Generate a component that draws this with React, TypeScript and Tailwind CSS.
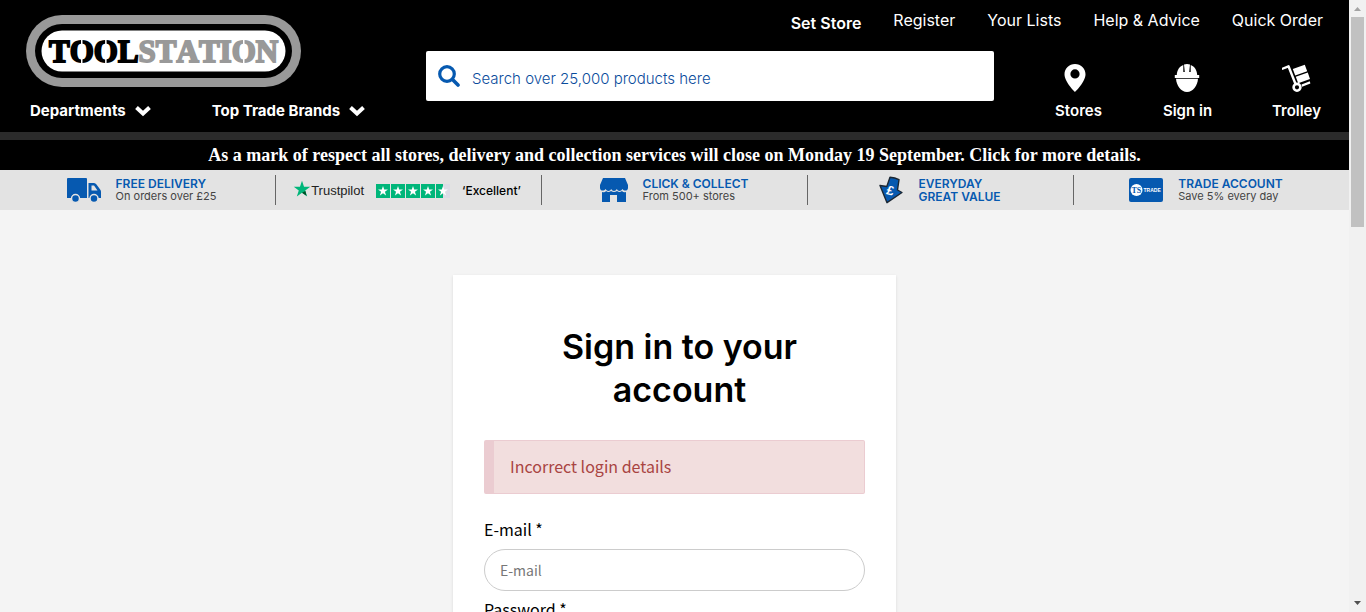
import React from "react";

const display = "font-['Inter','Liberation_Sans',sans-serif]";
const source = "font-['Noto_Sans_CJK_SC',sans-serif]";

function Logo() {
  return (
    <svg viewBox="0 0 275 72" className="block h-[72px] w-[275px]" role="img" aria-label="Toolstation">
      <rect width="275" height="72" rx="36" fill="#999" />
      <rect x="9" y="9" width="257" height="54" rx="27" fill="#000" />
      <rect x="15.500" y="15.500" width="244" height="41" rx="20.500" fill="#fff" />
      <text
        x="23"
        y="47"
        className="[font-kerning:none]"
        fontFamily="'Liberation Serif', serif"
        fontWeight="700"
        fontSize="31"
        fill="#000"
        stroke="#000"
        strokeWidth="1.800"
      >
        TOOL
        <tspan fill="#999" stroke="#999">STATION</tspan>
      </text>
      <path fill="#fff" d="M55 24h1.500v25H55zM79.100 24h1.500v25h-1.500zM217 24h1.500v25H217z" />
    </svg>
  );
}

function Chevron() {
  return (
    <svg viewBox="0 0 16 12" className="h-3 w-4" aria-hidden="true">
      <path d="M1.500 2.500 8 8.500l6.500-6" fill="none" stroke="#fff" strokeWidth="4" />
    </svg>
  );
}

function PinIcon() {
  return (
    <svg viewBox="4 0 30 30" className="h-[30px] w-[30px]" fill="#fff" aria-hidden="true">
      <path
        fillRule="evenodd"
        d="M15 1C9.200 1 4.500 5.600 4.500 11.300 4.500 19 15 29 15 29s10.500-10 10.500-17.700C25.500 5.600 20.800 1 15 1zm0 14.500a4.600 4.600 0 1 1 0-9.200 4.600 4.600 0 0 1 0 9.200z"
      />
    </svg>
  );
}

function HelmetIcon() {
  return (
    <svg viewBox="1 0 30 30" className="h-[30px] w-[30px]" fill="#fff" aria-hidden="true">
      <path d="M11.300 2v7h1.500L12 1.500q3-1 6 0L17.200 9h1.500V2c4 1.500 6.300 5.400 6.500 10h2v3H2.800v-3h2C5 7.400 7.300 3.500 11.300 2z" />
      <path d="M4 15.700h22c-.4 6.300-4.700 13.300-11 13.300S4.400 22 4 15.700z" />
    </svg>
  );
}

function TrolleyIcon() {
  return (
    <svg viewBox="1 0 30 30" className="h-[30px] w-[30px]" fill="#fff" aria-hidden="true">
      <path d="M.8 6 7.500 3.300 14.500 21" fill="none" stroke="#fff" strokeWidth="2.400" strokeLinejoin="round" />
      <circle cx="16" cy="24.300" r="3.400" fill="none" stroke="#fff" strokeWidth="2.600" />
      <path d="m11.800 6 12-4.200 2.400 6.500-12 4.200zM14.800 13.700l12-4.200 2.200 6.600-11.800 4.200zM20.500 21.500l8.300-3.200.6 2.300-8.300 3.200z" />
    </svg>
  );
}

function TruckIcon() {
  return (
    <svg viewBox="0 0 34 26" className="h-[26px] w-[34px]" aria-hidden="true">
      <path fill="#0659b0" d="M1 1h18q1 0 1 1v19H0V2q0-1 1-1zM21.500 6H27q1.500 0 2.500 1.500l4 5.500q.5 1 .5 2v6H21.500z" />
      <path fill="#e3e3e3" d="M24.500 8.500h2.500l3.500 5h-6z" />
      <g fill="#0659b0" stroke="#e3e3e3" strokeWidth="1.500">
        <circle cx="8.500" cy="21.500" r="4" />
        <circle cx="27" cy="21.500" r="4" />
      </g>
    </svg>
  );
}

function ShopIcon() {
  return (
    <svg viewBox="0 0 28 24" className="h-6 w-7" fill="#0659b0" aria-hidden="true">
      <path d="M3 0h22l3 7v3c0 3-4 3.500-5.500 1-1.500 2.500-4.500 2.500-5.700 0-1.200 2.500-4.400 2.500-5.600 0-1.200 2.500-4.200 2.500-5.700 0C4 13.500 0 13 0 10V7z" />
      <path d="M2 14q3 1 4-1 2.500 2 5 0 3 2 6 0 2.500 2 5 0 1.500 2 4 1v10h-9v-7h-7v7H2z" />
    </svg>
  );
}

function ValueIcon() {
  return (
    <svg viewBox="0 0 24 28" className="h-7 w-6" aria-hidden="true">
      <path
        d="M11 1.200q5 .2 9 2.500l-1.500 10.300 4.500 2.500-15 10.200L1 9.500l6.800 1z"
        fill="#0659b0"
        stroke="#1b2733"
        strokeWidth="1.400"
        strokeLinejoin="round"
      />
      <text
        x="7.500"
        y="19"
        fontFamily="'Liberation Sans', sans-serif"
        fontWeight="700"
        fontSize="13"
        fill="#fff"
        transform="rotate(14 11 15)"
      >
        £
      </text>
    </svg>
  );
}

function TradeIcon() {
  return (
    <svg viewBox="0 0 34 24" className="h-6 w-[34px]" aria-hidden="true">
      <rect width="34" height="24" rx="2" fill="#0659b0" />
      <circle cx="7.500" cy="12" r="6" fill="#fff" />
      <text x="2.500" y="14.800" fontFamily="'Liberation Serif', serif" fontWeight="700" fontSize="8" fill="#0659b0">
        TS
      </text>
      <text x="14.500" y="14" fontFamily="'Liberation Sans', sans-serif" fontWeight="700" fontSize="5" fill="#fff">
        TRADE
      </text>
    </svg>
  );
}

const STAR = "M12 1l2.700 8h8.300l-6.700 5 2.600 8L12 17l-6.900 5 2.600-8L1 9h8.300z";

function Trustpilot() {
  return (
    <a href="#reviews" className="flex items-center pt-[2px] pr-[2px] text-[#222]">
      <svg viewBox="0 0 24 24" className="mb-1 h-[18px] w-[18px]" aria-hidden="true">
        <path d={STAR} fill="#00b67a" />
        <path d="M16.500 14.500 12 17l6 4z" fill="#005128" />
      </svg>
      <span className="text-[13px] leading-4 font-['Liberation_Sans',sans-serif]">Trustpilot</span>
      <span className="ml-3 flex gap-px" role="img" aria-label="4.5 out of 5 stars">
        {[0, 1, 2, 3, 4].map((i) => (
          <svg key={i} viewBox="0 0 28 28" className="h-[14px] w-[14px]">
            <rect width="28" height="28" fill="#dcdce6" />
            <rect width={i === 4 ? 14 : 28} height="28" fill="#00b67a" />
            <path d={STAR} transform="translate(3.200 3) scale(.9)" fill="#fff" />
          </svg>
        ))}
      </span>
      <span className="ml-3 text-[12px] leading-4 font-medium text-black">‘Excellent’</span>
    </a>
  );
}

function Usp({ icon, title, sub, blueSub }: { icon: React.ReactNode; title: string; sub: string; blueSub?: boolean }) {
  return (
    <a href="#info" className="flex items-center gap-[15px]">
      {icon}
      <span className="flex flex-col text-[12px] leading-[13px] whitespace-nowrap">
        <span className="font-semibold text-[#0659b0]">{title}</span>
        <span className={blueSub ? "font-semibold text-[#0659b0]" : "text-[11px] text-[#444]"}>{sub}</span>
      </span>
    </a>
  );
}

function Scrollbar() {
  return (
    <div className="flex w-[17px] shrink-0 flex-col items-center justify-between bg-[#f1f1f1]" aria-hidden="true">
      <div className="flex flex-col items-center">
        <svg viewBox="0 0 17 17" className="h-[17px] w-[17px]">
          <path d="M5 11h7L8.500 7z" fill="#a3a3a3" />
        </svg>
        <div className="h-[210px] w-[13px] bg-[#c1c1c1]" />
      </div>
      <svg viewBox="0 0 17 17" className="h-[17px] w-[17px]">
        <path d="M5 6h7l-3.500 4z" fill="#505050" />
      </svg>
    </div>
  );
}

export default function App() {
  return (
    <div className={`flex h-screen overflow-hidden bg-[#f4f4f4] text-black ${display}`}>
      <div className="min-w-0 flex-1 overflow-hidden">
        <header className="flex h-[140px] justify-between border-b-8 border-[#2b2b2b] bg-black text-white">
          <div className="flex w-[426px] shrink-0 flex-col pt-[15px] pl-[26px]">
            <a href="#home">
              <Logo />
            </a>
            <nav className="mt-3 flex gap-[61px] pl-1 text-[15px] leading-6 font-bold">
              <button className="flex items-center gap-[9px]">
                Departments <Chevron />
              </button>
              <button className="flex items-center gap-[9px]">
                Top Trade Brands <Chevron />
              </button>
            </nav>
          </div>
          <div className="flex min-w-0 flex-1 flex-col">
            <nav className="flex h-[51px] items-start justify-end gap-8 pt-2 pr-[26px] text-[16px] leading-6">
              <button className="pt-[3px] font-semibold">Set Store</button>
              <a href="#register">Register</a>
              <a href="#lists">Your Lists</a>
              <a href="#help">Help &amp; Advice</a>
              <a href="#quick">Quick Order</a>
            </nav>
            <div className="flex justify-between">
              <label className="flex h-[50px] w-[568px] items-center rounded-xs bg-white pl-3">
                <svg viewBox="0 0 22 22" className="h-[22px] w-[22px]" fill="none" stroke="#0659b0" aria-hidden="true">
                  <circle cx="9" cy="9" r="7.300" strokeWidth="3.200" />
                  <path d="m14.500 14.500 5.500 5.500" strokeWidth="3.600" strokeLinecap="round" />
                </svg>
                <input
                  type="search"
                  aria-label="Search"
                  placeholder="Search over 25,000 products here"
                  className="ml-3 min-w-0 flex-1 pt-[6px] text-[15px] font-light outline-none placeholder:text-[#0a4c9c]"
                />
              </label>
              <nav className="flex gap-1 pt-3 text-[15px] leading-6 font-semibold">
                <a href="#stores" className="flex w-[105px] flex-col items-center gap-[6px]">
                  <PinIcon />
                  Stores
                </a>
                <a href="#signin" className="flex w-[105px] flex-col items-center gap-[6px]">
                  <HelmetIcon />
                  Sign in
                </a>
                <a href="#trolley" className="flex w-[105px] flex-col items-center gap-[6px]">
                  <TrolleyIcon />
                  Trolley
                </a>
              </nav>
            </div>
          </div>
        </header>
        <a
          href="#notice"
          className="block h-[30px] bg-black text-center text-[18px] leading-[30px] font-bold text-white font-['Liberation_Serif',serif]"
        >
          As a mark of respect all stores, delivery and collection services will close on Monday 19 September. Click for more
          details.
        </a>
        <ul className="flex h-10 items-center justify-center bg-[#e3e3e3] pr-[2px] [&>li]:flex [&>li]:h-[30px] [&>li]:w-[266px] [&>li]:items-center [&>li]:justify-center [&>li+li]:border-l [&>li+li]:border-[#666]">
          <li>
            <Usp icon={<TruckIcon />} title="FREE DELIVERY" sub="On orders over £25" />
          </li>
          <li>
            <Trustpilot />
          </li>
          <li>
            <Usp icon={<ShopIcon />} title="CLICK & COLLECT" sub="From 500+ stores" />
          </li>
          <li>
            <Usp icon={<ValueIcon />} title="EVERYDAY" sub="GREAT VALUE" blueSub />
          </li>
          <li>
            <Usp icon={<TradeIcon />} title="TRADE ACCOUNT" sub="Save 5% every day" />
          </li>
        </ul>
        <main className="flex justify-center pt-[65px]">
          <form className={`w-[443px] bg-white px-[31px] pt-[50px] pb-10 shadow-sm ${source}`}>
            <h1 className={`mb-[29px] pl-[10px] text-center text-[34px] leading-[43px] font-semibold ${display}`}>
              Sign in to your
              <br />
              account
            </h1>
            <div
              role="alert"
              className="flex h-[54px] items-center rounded-xs border border-l-[10px] border-[#ebccd1] bg-[#f2dede] pb-[2px] pl-4 text-[16px] text-[#a94442]"
            >
              Incorrect login details
            </div>
            <label htmlFor="email" className="mt-[23px] block text-[16px] leading-6">
              E-mail *
            </label>
            <input
              id="email"
              type="email"
              placeholder="E-mail"
              className="mt-2 block h-[42px] w-full rounded-full border border-[#ccc] px-[15px] text-[14px] outline-none placeholder:text-[#777]"
            />
            <label htmlFor="password" className="mt-[6px] block text-[16px] leading-6">
              Password *
            </label>
            <input
              id="password"
              type="password"
              placeholder="Password"
              className="mt-2 block h-[42px] w-full rounded-full border border-[#ccc] px-[15px] text-[14px] outline-none placeholder:text-[#777]"
            />
          </form>
        </main>
      </div>
      <Scrollbar />
    </div>
  );
}
